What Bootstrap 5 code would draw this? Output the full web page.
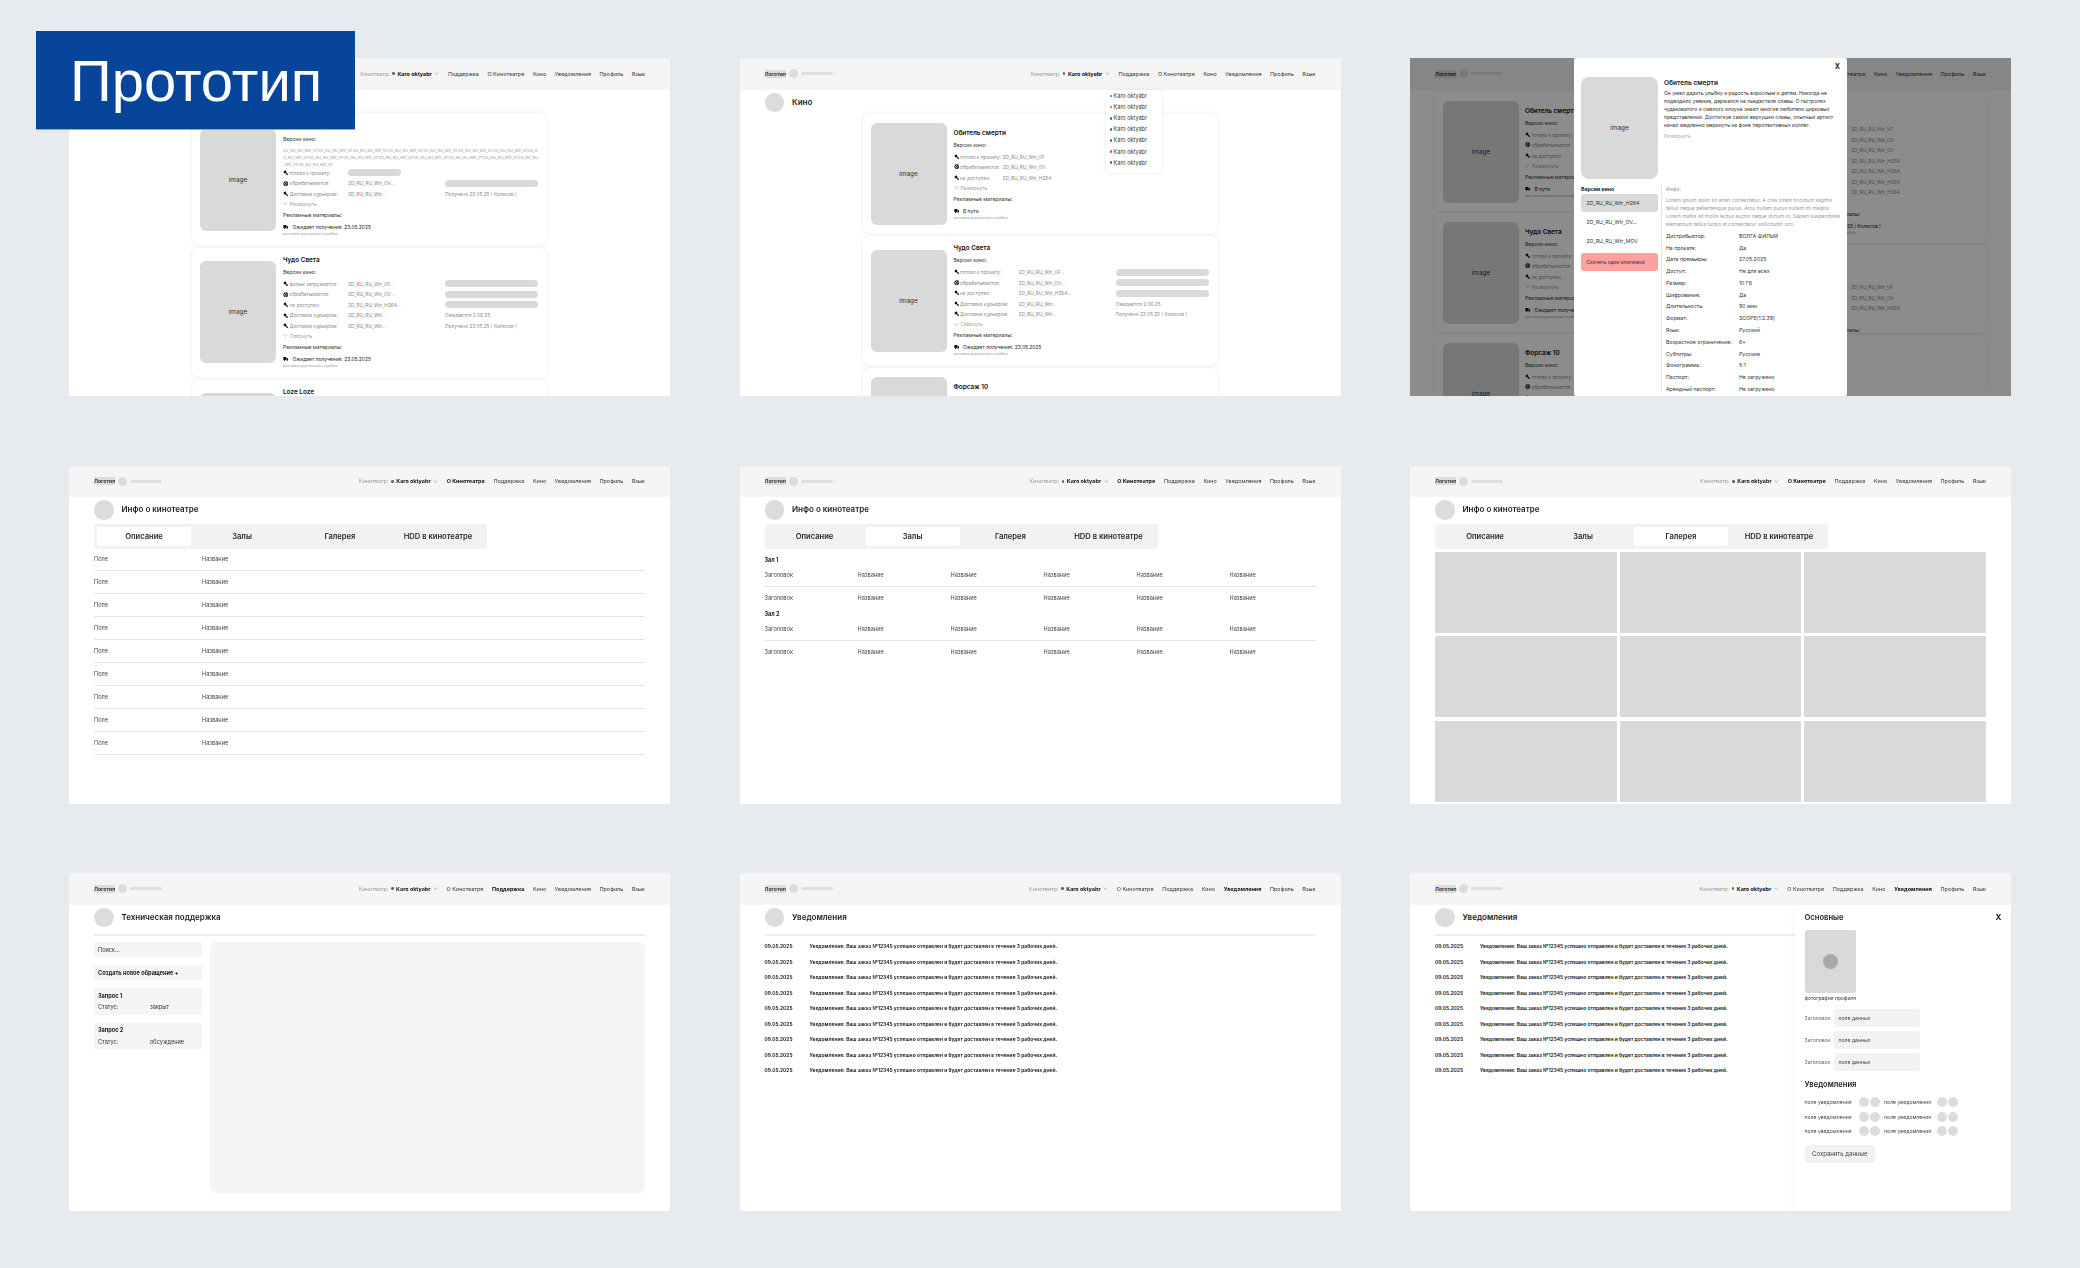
<!DOCTYPE html>
<html lang="ru">
<head>
<meta charset="UTF-8">
<title>Прототип</title>
<link href="https://cdn.jsdelivr.net/npm/bootstrap@5.3.0/dist/css/bootstrap.min.css" rel="stylesheet">
<style>
  body { margin: 0; background: #e7eaef; font-family: Inter, "Noto Sans", sans-serif; color: #1c1c1c; font-size: 6px; line-height: 8px; }
  .board { position: relative; width: 2080px; height: 1268px; padding: 58px 0 0 69px; display: grid; grid-template-columns: repeat(3, 601px); grid-auto-rows: 338px; column-gap: 69.5px; row-gap: 69.5px; overflow: hidden; }
  .screen { position: relative; background: #fff; overflow: hidden; filter: blur(.3px); }
  .screen-open { overflow: visible; }
  .banner { position: absolute; left: 36px; top: 31px; width: 319px; height: 99px; padding-left: 34px; background: #06459a; border-bottom: 1px solid #9aa; color: #fff; font-family: "Liberation Sans", Arial, sans-serif; font-size: 58px; line-height: 100px; z-index: 5; }

  .topbar { height: 31.5px; padding: 0 25px; background: #f5f5f5; flex-wrap: nowrap; }
  .logo-word { display: block; width: 21px; height: 8px; background: #dcdcdc; font-size: 5.2px; font-weight: 600; line-height: 8px; text-align: center; color: #222; }
  .logo-dot { width: 9px; height: 9px; margin: 0 3px; border-radius: 50%; background: #dcdcdc; }
  .logo-line { width: 32px; height: 3px; border-radius: 2px; background: #dfdfdf; }
  .topnav { gap: 8.6px; font-size: 5.45px; }
  .topnav .nav-link { padding: 0; color: #333; }
  .topnav .nav-link.active { color: #111; font-weight: 700; }
  .cinema-pick { gap: 2.5px; color: #999; }
  .cinema-pick b { color: #111; font-weight: 700; }
  .bullet { display: inline-block; width: 2.6px; height: 2.6px; border-radius: 50%; background: #666; flex: none; }
  .bullet-red { background: #e5484d; }
  .chev { width: 5px; height: 3px; fill: none; stroke: #888; stroke-width: 1; }

  .pagehead { display: flex; align-items: center; gap: 8px; padding: 3px 25px 0; font-size: 8px; font-weight: 600; line-height: 19.5px; }
  .pagehead i { width: 19.5px; height: 19.5px; border-radius: 50%; background: #dcdcdc; flex: none; }
  .head-rule { height: 1.5px; margin: 7px 25px 0; background: #eee; }

  .tabbar { width: 393px; height: 25px; margin: 4px 25px 0; padding: 3px; gap: 4px; background: #f2f2f2; border-radius: 3px; flex-wrap: nowrap; }
  .tabbar .nav-link { width: 94px; height: 19px; padding: 0; border-radius: 2px; color: #2a2a2a; font-size: 7.6px; font-weight: 600; line-height: 19px; text-align: center; }
  .tabbar .nav-link.active { background: #fff; color: #2a2a2a; }

  .field-row { display: flex; align-items: center; height: 23px; margin: 0 25px; border-bottom: 1px solid #e4e4e4; color: #444; font-size: 5.6px; }
  .field-row:first-of-type { height: 22px; }
  .field-row span:first-child { width: 108px; }

  .halls { padding-top: 7px; }
  .hall-title { height: 8px; margin: 0 25px; font-size: 5.6px; font-weight: 700; }
  .hall-row { display: grid; grid-template-columns: repeat(6, 93px); align-items: center; height: 23px; margin: 0 25px; color: #444; font-size: 5.6px; }
  .hall-line { border-bottom: 1px solid #e4e4e4; }

  .shots { display: grid; grid-template-columns: repeat(3, 181.5px); grid-auto-rows: 81px; gap: 3.5px 3px; margin: 3px 25px 0; }
  .shots div { background: #d9d9d9; }

  .support { display: flex; gap: 8px; margin: 6.5px 25px 0; }
  .support-left { width: 107.5px; flex: none; display: flex; flex-direction: column; gap: 8px; }
  .support-item { padding: 3.5px 4px; background: #f5f5f5; border-radius: 2px; font-size: 5.6px; color: #333; }
  .support-item b { font-weight: 700; color: #1c1c1c; }
  .support-status { display: grid; grid-template-columns: 52px 1fr; margin-top: 3.5px; }
  .support-chat { flex: 1; height: 251px; background: #f5f5f5; border-radius: 6px; }

  .notice-list { margin-top: 2.75px; }
  .notice { display: flex; align-items: center; height: 15.5px; margin: 0 25px; font-size: 4.95px; font-weight: 600; color: #111; white-space: nowrap; }
  .notice span:first-child { width: 45px; }

  .drawer { position: absolute; left: 385px; right: 0; top: 31.5px; bottom: 0; padding: 8px 10px 0 9.5px; background: #fff; box-shadow: -1px 1px 6px rgba(0,0,0,.04); font-size: 5.1px; color: #444; }
  .drawer h6 { margin: 0; font-size: 7.6px; line-height: 9px; font-weight: 600; color: #1c1c1c; }
  .drawer-x { position: absolute; right: 9.5px; top: 8px; font-size: 8px; line-height: 9px; font-weight: 700; color: #222; }
  .photo { display: flex; align-items: center; justify-content: center; width: 51px; height: 63px; margin-top: 8.5px; background: #d9d9d9; border-radius: 2px; }
  .photo i { width: 15px; height: 15px; border-radius: 50%; background: #a9a9a9; }
  .photo-cap { margin-top: 1px; color: #333; font-size: 5px; }
  .form-lines { display: flex; flex-direction: column; gap: 4px; margin: 7px 0 8.5px; }
  .form-line { display: flex; align-items: center; }
  .form-line label { width: 29px; margin: 0; color: #666; }
  .data-box { width: 86px; height: 18px; padding-left: 5px; border-radius: 3px; background: #f2f2f2; line-height: 18px; color: #444; }
  .switch-grid { display: grid; grid-template-columns: 53.5px 10px 10px 2.1px 52px 10px 10px; grid-auto-rows: 14.5px; column-gap: 1px; align-items: center; margin-top: 6.5px; white-space: nowrap; }
  .switch-grid i { width: 10px; height: 10px; border-radius: 50%; background: #dcdcdc; }
  .btn.save-btn { width: 70.5px; height: 18px; margin-top: 6px; padding: 0; border: 0; border-radius: 3px; background: #f2f2f2; color: #444; font-size: 6px; line-height: 18px; }

  .film-stack { display: flex; flex-direction: column; gap: 3px; width: 355px; margin: 1px 0 0 123px; }
  .film-stack-low { margin-top: 2px; }
  .card.film { flex-direction: row; align-items: center; gap: 7px; padding: 8px; border: 0; border-radius: 7px; box-shadow: 0 0 4px rgba(0,0,0,.09); flex: none; }
  .film-first { padding-top: 10px !important; }
  .film-short { padding: 8.5px 8px !important; }
  .film-short .film-info { padding-top: 2px; }
  .film-img { display: flex; align-items: center; justify-content: center; width: 76px; height: 102px; flex: none; background: #d9d9d9; border-radius: 6px; font-size: 6.4px; color: #333; }
  .film-info { flex: 1; min-width: 0; }
  .film-name { font-size: 6.4px; font-weight: 600; color: #111; }
  .film-sub { margin-top: 4px; font-size: 5.1px; color: #333; }
  .film-sub-gap { margin-top: 3px; }
  .long-versions { margin-top: 3.5px; width: 256px; font-size: 4px; line-height: 7px; color: #999; word-break: break-all; }
  .ver-rows { margin-top: 2.75px; }
  .long-versions + .ver-rows { margin-top: 0; }
  .ver-row { display: grid; grid-template-columns: 65px 97px 93px; align-items: center; height: 10.5px; font-size: 4.8px; color: #888; white-space: nowrap; }
  .ver-short { grid-template-columns: 49px 1fr; }
  .ver-status { display: flex; align-items: center; gap: 1px; }
  .ico { width: 5.5px; height: 5.5px; fill: #111; flex: none; }
  .bar { display: block; height: 7px; border-radius: 4px; background: #d9d9d9; }
  .bar-mid { width: 53px; }
  .film-toggle { margin-top: .75px; display: flex; align-items: center; gap: 2px; font-size: 4.7px; color: #999; }
  .film-ship { display: flex; align-items: center; gap: 4px; margin-top: 4px; font-size: 4.95px; color: #222; white-space: nowrap; }
  .film-note { font-size: 3.6px; line-height: 6px; color: #999; white-space: nowrap; }

  .cinema-menu.dropdown-menu { position: absolute; display: block; left: 366px; top: 31.5px; width: 56px; min-width: 0; height: 83px; padding: 1px 0 0; border: 0; border-radius: 4px; box-shadow: 0 0 4px rgba(0,0,0,.09); font-size: 5.5px; z-index: 3; }
  .cinema-menu .dropdown-item { display: flex; align-items: center; gap: 1.5px; height: 11.1px; padding: 0 0 0 4px; color: #333; font-size: 5.5px; }

  .under { display: flex; margin-top: 2.5px; padding-left: 25px; }
  .under-left { width: 275px; flex: none; display: flex; flex-direction: column; gap: 2px; }
  .under-left .card.film { gap: 6px; }
  .under-right { width: 278px; flex: none; display: flex; flex-direction: column; gap: 2px; }
  .under-card { padding-left: 141px; background: #fff; border-radius: 7px; box-shadow: 0 0 4px rgba(0,0,0,.09); }
  .under-card-a { height: 151px; padding-top: 31.75px; }
  .under-card-b { height: 88px; padding-top: 37px; }
  .under-card-c { height: 60px; }
  .under-card .ver-row { grid-template-columns: 1fr; }
  .shift-text { margin-left: -50px; }
  .under-card-a .film-sub { margin-top: 13px; }
  .under-card-b .film-sub { margin-top: 12px; }
  .dim { position: absolute; inset: 0; background: rgba(0,0,0,.45); z-index: 1; }
  .film-dialog { position: absolute; left: 163.5px; top: 0; width: 273.5px; height: 338px; background: #fff; border-radius: 2px; z-index: 2; }
  .dialog-x { position: absolute; right: 7px; top: 5px; font-size: 7px; line-height: 8px; font-weight: 700; color: #222; }
  .dialog-top { display: flex; gap: 6px; height: 126px; padding: 19px 0 0 7.5px; }
  .dialog-top .film-img { width: 77px; border-radius: 8px; }
  .dialog-text { padding-top: 2px; font-size: 5.05px; color: #333; white-space: nowrap; }
  .dialog-text h6 { margin: 0 0 2px; font-size: 6.6px; line-height: 8px; font-weight: 600; color: #222; }
  .dialog-text p { margin: 0; }
  .dialog-more { margin-top: 3px; color: #aaa; font-size: 4.7px; }
  .dialog-low { display: flex; padding-left: 7.5px; }
  .dialog-vers { width: 77px; flex: none; font-size: 5.2px; }
  .dialog-vers b { display: block; margin: 1px 0; font-weight: 700; color: #222; }
  .dialog-vers .list-group { gap: 1px; border-radius: 0; }
  .dialog-vers .list-group-item { height: 18px; padding: 0 0 0 5.5px; border: 0; border-radius: 3px; background: #fff; color: #333; font-size: 5.2px; line-height: 18px; white-space: nowrap; }
  .dialog-vers .list-group-item.active { background: #d9d9d9; color: #333; }
  .dialog-vers .btn-key { display: block; width: 100%; height: 18px; margin-top: 3px; padding: 0 0 0 5.5px; border: 0; border-radius: 3px; background: #ffa0a0; color: #333; font-size: 4.9px; line-height: 18px; text-align: left; white-space: nowrap; }
  .dialog-info { width: 180px; height: 209px; margin-left: 3px; padding: 1px 0 0 4px; border-left: 1px solid #e5e5e5; font-size: 5.2px; color: #999; white-space: nowrap; }
  .dialog-info p { margin: 3px 0 2px; font-size: 5px; }
  .info-row { display: grid; grid-template-columns: 73px 1fr; height: 11.77px; align-items: center; color: #333; white-space: nowrap; }
</style>
</head>
<body>
<svg class="d-none" xmlns="http://www.w3.org/2000/svg">
  <symbol id="i-hammer" viewBox="0 0 16 16"><path d="M1 6 6 1l4 3.5-1.6 1.6L15 13l-2.2 2.2L6 8.6 4.6 10z"/></symbol>
  <symbol id="i-reel" viewBox="0 0 16 16"><path fill-rule="evenodd" d="M8 1a7 7 0 1 0 0 14A7 7 0 0 0 8 1zm0 1.8a1.7 1.7 0 1 1 0 3.4 1.7 1.7 0 0 1 0-3.4zm0 7a1.7 1.7 0 1 1 0 3.4 1.7 1.7 0 0 1 0-3.4zM4.5 6.3a1.7 1.7 0 1 1 0 3.4 1.7 1.7 0 0 1 0-3.4zm7 0a1.7 1.7 0 1 1 0 3.4 1.7 1.7 0 0 1 0-3.4z"/></symbol>
  <symbol id="i-truck" viewBox="0 0 16 16"><path d="M1 3h9v8.5H1zM11 6h2.4L15 8.6v2.9h-4z"/><circle cx="4.5" cy="12.5" r="1.8"/><circle cx="12" cy="12.5" r="1.8"/></symbol>
  <symbol id="i-chev" viewBox="0 0 8 5"><path d="M1 1l3 3 3-3"/></symbol>
</svg>

<div class="board">

  <!-- 1: films -->
  <section class="screen">
    <nav class="navbar topbar">
      <div class="d-flex align-items-center"><span class="logo-word">Логотип</span><span class="logo-dot"></span><span class="logo-line"></span></div>
      <ul class="nav topnav align-items-center">
        <li class="d-flex align-items-center cinema-pick">Кинотеатр: <span class="bullet"></span><b>Karo oktyabr</b><svg class="chev"><use href="#i-chev"/></svg></li>
        <li><a class="nav-link" href="#">Поддержка</a></li><li><a class="nav-link" href="#">О Кинотеатре</a></li><li><a class="nav-link" href="#">Кино</a></li><li><a class="nav-link" href="#">Уведомления</a></li><li><a class="nav-link" href="#">Профиль</a></li><li><a class="nav-link" href="#">Язык</a></li>
      </ul>
    </nav>
    <div class="pagehead"><i></i>Кино</div>
    <div class="film-stack">
      <article class="card film film-first">
        <div class="film-img">image</div>
        <div class="film-info">
          <div class="film-name">Обитель смерти</div>
          <div class="film-sub">Версии кино:</div>
          <div class="long-versions">2D_RU_RU_Wtr_VF2D_RU_RU_Wtr_VF2D_RU_RU_Wtr_VF2D_RU_RU_Wtr_VF2D_RU_RU_Wtr_VF2D_RU_RU_Wtr_VF2D_RU_RU_Wtr_VF2D_RU_RU_Wtr_VF2D_RU_RU_Wtr_VF2D_RU_RU_Wtr_VF2D_RU_RU_Wtr_VF2D_RU_RU_Wtr_VF2D_RU_RU_Wtr_VF2D_RU_RU_Wtr_VF2D_RU_RU_Wtr_VF2D_RU_RU_Wtr_VF</div>
          <div class="ver-rows">
            <div class="ver-row"><span class="ver-status"><svg class="ico"><use href="#i-hammer"/></svg>готово к прокату:</span><span class="bar bar-mid"></span><span></span></div>
            <div class="ver-row"><span class="ver-status"><svg class="ico"><use href="#i-reel"/></svg>обрабатывается:</span><span>2D_RU_RU_Wtr_OV...</span><span class="bar"></span></div>
            <div class="ver-row"><span class="ver-status"><svg class="ico"><use href="#i-hammer"/></svg>Доставка курьером:</span><span>2D_RU_RU_Wtr...</span><span>Получено 23.05.25 ( Колесов )</span></div>
          </div>
          <div class="film-toggle"><svg class="chev"><use href="#i-chev"/></svg>Развернуть</div>
          <div class="film-sub film-sub-gap">Рекламные материалы:</div>
          <div class="film-ship"><svg class="ico"><use href="#i-truck"/></svg>Ожидает получения: 23.05.2025</div>
          <div class="film-note">доставка курьерской службой</div>
        </div>
      </article>
      <article class="card film">
        <div class="film-img">image</div>
        <div class="film-info">
          <div class="film-name">Чудо Света</div>
          <div class="film-sub">Версии кино:</div>
          <div class="ver-rows">
            <div class="ver-row"><span class="ver-status"><svg class="ico"><use href="#i-hammer"/></svg>фильм загружается:</span><span>2D_RU_RU_Wtr_VF...</span><span class="bar"></span></div>
            <div class="ver-row"><span class="ver-status"><svg class="ico"><use href="#i-reel"/></svg>обрабатывается:</span><span>2D_RU_RU_Wtr_OV...</span><span class="bar"></span></div>
            <div class="ver-row"><span class="ver-status"><svg class="ico"><use href="#i-hammer"/></svg>не доступен:</span><span>2D_RU_RU_Wtr_H264...</span><span class="bar"></span></div>
            <div class="ver-row"><span class="ver-status"><svg class="ico"><use href="#i-hammer"/></svg>Доставка курьером:</span><span>2D_RU_RU_Wtr...</span><span>Ожидается 2.06.25</span></div>
            <div class="ver-row"><span class="ver-status"><svg class="ico"><use href="#i-hammer"/></svg>Доставка курьером:</span><span>2D_RU_RU_Wtr...</span><span>Получено 23.05.25 ( Колесов )</span></div>
          </div>
          <div class="film-toggle"><svg class="chev"><use href="#i-chev"/></svg>Свернуть</div>
          <div class="film-sub film-sub-gap">Рекламные материалы:</div>
          <div class="film-ship"><svg class="ico"><use href="#i-truck"/></svg>Ожидает получения: 23.05.2025</div>
          <div class="film-note">доставка курьерской службой</div>
        </div>
      </article>
      <article class="card film">
        <div class="film-img">image</div>
        <div class="film-info">
          <div class="film-name">Loze Loze</div>
          <div class="film-sub">Версии кино:</div>
          <div class="ver-rows">
            <div class="ver-row"><span class="ver-status"><svg class="ico"><use href="#i-hammer"/></svg>готово к прокату:</span><span>2D_RU_RU_Wtr_VF...</span><span class="bar"></span></div>
            <div class="ver-row"><span class="ver-status"><svg class="ico"><use href="#i-reel"/></svg>обрабатывается:</span><span>2D_RU_RU_Wtr_OV...</span><span class="bar"></span></div>
            <div class="ver-row"><span class="ver-status"><svg class="ico"><use href="#i-hammer"/></svg>не доступен:</span><span>2D_RU_RU_Wtr_H264...</span><span class="bar"></span></div>
            <div class="ver-row"><span class="ver-status"><svg class="ico"><use href="#i-hammer"/></svg>Доставка курьером:</span><span>2D_RU_RU_Wtr...</span><span>Ожидается 2.06.25</span></div>
            <div class="ver-row"><span class="ver-status"><svg class="ico"><use href="#i-hammer"/></svg>Доставка курьером:</span><span>2D_RU_RU_Wtr...</span><span>Получено 23.05.25 ( Колесов )</span></div>
          </div>
          <div class="film-toggle"><svg class="chev"><use href="#i-chev"/></svg>Свернуть</div>
          <div class="film-sub film-sub-gap">Рекламные материалы:</div>
          <div class="film-ship"><svg class="ico"><use href="#i-truck"/></svg>В пути</div>
          <div class="film-note">доставка курьерской службой</div>
        </div>
      </article>
    </div>
  </section>

  <!-- 2: films with the cinema menu open -->
  <section class="screen">
    <nav class="navbar topbar">
      <div class="d-flex align-items-center"><span class="logo-word">Логотип</span><span class="logo-dot"></span><span class="logo-line"></span></div>
      <ul class="nav topnav align-items-center">
        <li class="d-flex align-items-center cinema-pick">Кинотеатр: <span class="bullet"></span><b>Karo oktyabr</b><svg class="chev"><use href="#i-chev"/></svg></li>
        <li><a class="nav-link" href="#">Поддержка</a></li><li><a class="nav-link" href="#">О Кинотеатре</a></li><li><a class="nav-link" href="#">Кино</a></li><li><a class="nav-link" href="#">Уведомления</a></li><li><a class="nav-link" href="#">Профиль</a></li><li><a class="nav-link" href="#">Язык</a></li>
      </ul>
    </nav>
    <div class="pagehead"><i></i>Кино</div>
    <div class="dropdown-menu cinema-menu">
      <a class="dropdown-item" href="#"><span class="bullet"></span>Karo oktyabr</a>
      <a class="dropdown-item" href="#"><span class="bullet bullet-red"></span>Karo oktyabr</a>
      <a class="dropdown-item" href="#"><span class="bullet"></span>Karo oktyabr</a>
      <a class="dropdown-item" href="#"><span class="bullet"></span>Karo oktyabr</a>
      <a class="dropdown-item" href="#"><span class="bullet"></span>Karo oktyabr</a>
      <a class="dropdown-item" href="#"><span class="bullet bullet-red"></span>Karo oktyabr</a>
      <a class="dropdown-item" href="#"><span class="bullet"></span>Karo oktyabr</a>
    </div>
    <div class="film-stack film-stack-low">
      <article class="card film film-short">
        <div class="film-img">image</div>
        <div class="film-info">
          <div class="film-name">Обитель смерти</div>
          <div class="film-sub">Версии кино:</div>
          <div class="ver-rows">
            <div class="ver-row ver-short"><span class="ver-status"><svg class="ico"><use href="#i-hammer"/></svg>готово к прокату:</span><span>2D_RU_RU_Wtr_VF</span></div>
            <div class="ver-row ver-short"><span class="ver-status"><svg class="ico"><use href="#i-reel"/></svg>обрабатывается:</span><span>2D_RU_RU_Wtr_OV</span></div>
            <div class="ver-row ver-short"><span class="ver-status"><svg class="ico"><use href="#i-hammer"/></svg>не доступен:</span><span>2D_RU_RU_Wtr_H264</span></div>
          </div>
          <div class="film-toggle"><svg class="chev"><use href="#i-chev"/></svg>Развернуть</div>
          <div class="film-sub film-sub-gap">Рекламные материалы:</div>
          <div class="film-ship"><svg class="ico"><use href="#i-truck"/></svg>В пути</div>
          <div class="film-note">доставка курьерской службой</div>
        </div>
      </article>
      <article class="card film">
        <div class="film-img">image</div>
        <div class="film-info">
          <div class="film-name">Чудо Света</div>
          <div class="film-sub">Версии кино:</div>
          <div class="ver-rows">
            <div class="ver-row"><span class="ver-status"><svg class="ico"><use href="#i-hammer"/></svg>готово к прокату:</span><span>2D_RU_RU_Wtr_VF...</span><span class="bar"></span></div>
            <div class="ver-row"><span class="ver-status"><svg class="ico"><use href="#i-reel"/></svg>обрабатывается:</span><span>2D_RU_RU_Wtr_OV...</span><span class="bar"></span></div>
            <div class="ver-row"><span class="ver-status"><svg class="ico"><use href="#i-hammer"/></svg>не доступен:</span><span>2D_RU_RU_Wtr_H264...</span><span class="bar"></span></div>
            <div class="ver-row"><span class="ver-status"><svg class="ico"><use href="#i-hammer"/></svg>Доставка курьером:</span><span>2D_RU_RU_Wtr...</span><span>Ожидается 2.06.25</span></div>
            <div class="ver-row"><span class="ver-status"><svg class="ico"><use href="#i-hammer"/></svg>Доставка курьером:</span><span>2D_RU_RU_Wtr...</span><span>Получено 23.05.25 ( Колесов )</span></div>
          </div>
          <div class="film-toggle"><svg class="chev"><use href="#i-chev"/></svg>Свернуть</div>
          <div class="film-sub film-sub-gap">Рекламные материалы:</div>
          <div class="film-ship"><svg class="ico"><use href="#i-truck"/></svg>Ожидает получения: 23.05.2025</div>
          <div class="film-note">доставка курьерской службой</div>
        </div>
      </article>
      <article class="card film film-short">
        <div class="film-img">image</div>
        <div class="film-info">
          <div class="film-name">Форсаж 10</div>
          <div class="film-sub">Версии кино:</div>
          <div class="ver-rows">
            <div class="ver-row ver-short"><span class="ver-status"><svg class="ico"><use href="#i-hammer"/></svg>готово к прокату:</span><span>2D_RU_RU_Wtr_VF</span></div>
            <div class="ver-row ver-short"><span class="ver-status"><svg class="ico"><use href="#i-reel"/></svg>обрабатывается:</span><span>2D_RU_RU_Wtr_OV</span></div>
            <div class="ver-row ver-short"><span class="ver-status"><svg class="ico"><use href="#i-hammer"/></svg>не доступен:</span><span>2D_RU_RU_Wtr_H264</span></div>
          </div>
          <div class="film-toggle"><svg class="chev"><use href="#i-chev"/></svg>Развернуть</div>
          <div class="film-sub film-sub-gap">Рекламные материалы:</div>
          <div class="film-ship"><svg class="ico"><use href="#i-truck"/></svg>В пути</div>
          <div class="film-note">доставка курьерской службой</div>
        </div>
      </article>
    </div>
  </section>

  <!-- 3: film dialog over the dimmed list -->
  <section class="screen">
    <nav class="navbar topbar">
      <div class="d-flex align-items-center"><span class="logo-word">Логотип</span><span class="logo-dot"></span><span class="logo-line"></span></div>
      <ul class="nav topnav align-items-center">
        <li class="d-flex align-items-center cinema-pick">Кинотеатр: <span class="bullet"></span><b>Karo oktyabr</b><svg class="chev"><use href="#i-chev"/></svg></li>
        <li><a class="nav-link" href="#">Поддержка</a></li><li><a class="nav-link" href="#">О Кинотеатре</a></li><li><a class="nav-link" href="#">Кино</a></li><li><a class="nav-link" href="#">Уведомления</a></li><li><a class="nav-link" href="#">Профиль</a></li><li><a class="nav-link" href="#">Язык</a></li>
      </ul>
    </nav>
    <div class="under">
      <div class="under-left">
        <article class="card film film-short">
          <div class="film-img">image</div>
          <div class="film-info">
            <div class="film-name">Обитель смерти</div>
            <div class="film-sub">Версии кино:</div>
            <div class="ver-rows">
              <div class="ver-row ver-short"><span class="ver-status"><svg class="ico"><use href="#i-hammer"/></svg>готово к прокату:</span></div>
              <div class="ver-row ver-short"><span class="ver-status"><svg class="ico"><use href="#i-reel"/></svg>обрабатывается:</span></div>
              <div class="ver-row ver-short"><span class="ver-status"><svg class="ico"><use href="#i-hammer"/></svg>не доступен:</span></div>
            </div>
            <div class="film-toggle"><svg class="chev"><use href="#i-chev"/></svg>Развернуть</div>
            <div class="film-sub film-sub-gap">Рекламные материалы:</div>
            <div class="film-ship"><svg class="ico"><use href="#i-truck"/></svg>В пути</div>
            <div class="film-note">доставка курьерской службой</div>
          </div>
        </article>
        <article class="card film film-short">
          <div class="film-img">image</div>
          <div class="film-info">
            <div class="film-name">Чудо Света</div>
            <div class="film-sub">Версии кино:</div>
            <div class="ver-rows">
              <div class="ver-row ver-short"><span class="ver-status"><svg class="ico"><use href="#i-hammer"/></svg>готово к прокату:</span></div>
              <div class="ver-row ver-short"><span class="ver-status"><svg class="ico"><use href="#i-reel"/></svg>обрабатывается:</span></div>
              <div class="ver-row ver-short"><span class="ver-status"><svg class="ico"><use href="#i-hammer"/></svg>не доступен:</span></div>
            </div>
            <div class="film-toggle"><svg class="chev"><use href="#i-chev"/></svg>Развернуть</div>
            <div class="film-sub film-sub-gap">Рекламные материалы:</div>
            <div class="film-ship"><svg class="ico"><use href="#i-truck"/></svg>Ожидает получения: 23.05.2025</div>
            <div class="film-note">доставка курьерской службой</div>
          </div>
        </article>
        <article class="card film film-short">
          <div class="film-img">image</div>
          <div class="film-info">
            <div class="film-name">Форсаж 10</div>
            <div class="film-sub">Версии кино:</div>
            <div class="ver-rows">
              <div class="ver-row ver-short"><span class="ver-status"><svg class="ico"><use href="#i-hammer"/></svg>готово к прокату:</span></div>
              <div class="ver-row ver-short"><span class="ver-status"><svg class="ico"><use href="#i-reel"/></svg>обрабатывается:</span></div>
              <div class="ver-row ver-short"><span class="ver-status"><svg class="ico"><use href="#i-hammer"/></svg>не доступен:</span></div>
            </div>
            <div class="film-toggle"><svg class="chev"><use href="#i-chev"/></svg>Развернуть</div>
            <div class="film-sub film-sub-gap">Рекламные материалы:</div>
            <div class="film-ship"><svg class="ico"><use href="#i-truck"/></svg>В пути</div>
            <div class="film-note">доставка курьерской службой</div>
          </div>
        </article>
      </div>
      <div class="under-right">
        <div class="under-card under-card-a">
          <div class="ver-row"><span>2D_RU_RU_Wtr_VF</span></div>
          <div class="ver-row"><span>2D_RU_RU_Wtr_OV</span></div>
          <div class="ver-row"><span>2D_RU_RU_Wtr_OV</span></div>
          <div class="ver-row"><span>2D_RU_RU_Wtr_H264</span></div>
          <div class="ver-row"><span>2D_RU_RU_Wtr_H264</span></div>
          <div class="ver-row"><span>2D_RU_RU_Wtr_H264</span></div>
          <div class="ver-row"><span>2D_RU_RU_Wtr_H264</span></div>
          <div class="film-sub shift-text">Рекламные материалы:</div>
          <div class="film-ship shift-text">Получено 23.05.2025 | Колесов )</div>
          <div class="film-note shift-text">доставка курьерской службой</div>
        </div>
        <div class="under-card under-card-b">
          <div class="ver-row"><span>2D_RU_RU_Wtr_VF</span></div>
          <div class="ver-row"><span>2D_RU_RU_Wtr_OV</span></div>
          <div class="ver-row"><span>2D_RU_RU_Wtr_H264</span></div>
          <div class="film-sub shift-text">Рекламные материалы:</div>
        </div>
        <div class="under-card under-card-c"></div>
      </div>
    </div>
    <div class="dim"></div>
    <div class="film-dialog">
      <span class="dialog-x">X</span>
      <div class="dialog-top">
        <div class="film-img">image</div>
        <div class="dialog-text">
          <h6>Обитель смерти</h6>
          <p>Он умел дарить улыбку и радость взрослым и детям. Никогда не<br>подводило умение, держался на пьедестале славы. О гастролях<br>чудаковатого и смелого клоуна знают многие любители цирковых<br>представлений. Достигнув самой верхушки славы, опытный артист<br>начал медленно меркнуть на фоне перспективных коллег.</p>
          <div class="dialog-more">Развернуть</div>
        </div>
      </div>
      <div class="dialog-low">
        <div class="dialog-vers">
          <b>Версии кино</b>
          <div class="list-group">
            <a class="list-group-item active" href="#">2D_RU_RU_Wtr_H264</a>
            <a class="list-group-item" href="#">2D_RU_RU_Wtr_OV...</a>
            <a class="list-group-item" href="#">2D_RU_RU_Wtr_MOV</a>
          </div>
          <button class="btn-key" type="button">Скачать один ключевой</button>
        </div>
        <div class="dialog-info">
          Инфо:
          <p>Lorem ipsum dolor sit amet consectetur. A cras lorem tincidunt sagittis<br>tellus neque pellentesque purus. Arcu nullam purus nullam mi magna.<br>Lorem mattis sit mollis lectus auctor neque dictum in. Sapien suspendisse<br>elementum tellus turpis at consectetur sollicitudin orci.</p>
          <div class="info-row"><span>Дистрибьютор:</span><span>ВОЛГА ФИЛЬМ</span></div>
          <div class="info-row"><span>На прокате:</span><span>Да</span></div>
          <div class="info-row"><span>Дата премьеры:</span><span>27.05.2025</span></div>
          <div class="info-row"><span>Доступ:</span><span>Не для всех</span></div>
          <div class="info-row"><span>Размер:</span><span>10 Гб</span></div>
          <div class="info-row"><span>Шифрование:</span><span>Да</span></div>
          <div class="info-row"><span>Длительность:</span><span>90 мин</span></div>
          <div class="info-row"><span>Формат:</span><span>SCOPE(1:2.39)</span></div>
          <div class="info-row"><span>Язык:</span><span>Русский</span></div>
          <div class="info-row"><span>Возрастное ограничение:</span><span>6+</span></div>
          <div class="info-row"><span>Субтитры:</span><span>Русские</span></div>
          <div class="info-row"><span>Фонограмма:</span><span>5:1</span></div>
          <div class="info-row"><span>Паспорт:</span><span>Не загружено</span></div>
          <div class="info-row"><span>Арендный паспорт:</span><span>Не загружено</span></div>
        </div>
      </div>
    </div>
  </section>

  <!-- 4: cinema info, description -->
  <section class="screen">
    <nav class="navbar topbar">
      <div class="d-flex align-items-center"><span class="logo-word">Логотип</span><span class="logo-dot"></span><span class="logo-line"></span></div>
      <ul class="nav topnav align-items-center">
        <li class="d-flex align-items-center cinema-pick">Кинотеатр: <span class="bullet"></span><b>Karo oktyabr</b><svg class="chev"><use href="#i-chev"/></svg></li>
        <li><a class="nav-link active" href="#">О Кинотеатре</a></li><li><a class="nav-link" href="#">Поддержка</a></li><li><a class="nav-link" href="#">Кино</a></li><li><a class="nav-link" href="#">Уведомления</a></li><li><a class="nav-link" href="#">Профиль</a></li><li><a class="nav-link" href="#">Язык</a></li>
      </ul>
    </nav>
    <div class="pagehead"><i></i>Инфо о кинотеатре</div>
    <ul class="nav tabbar"><li><a class="nav-link active" href="#">Описание</a></li><li><a class="nav-link" href="#">Залы</a></li><li><a class="nav-link" href="#">Галерея</a></li><li><a class="nav-link" href="#">HDD в кинотеатре</a></li></ul>
    <div>
      <div class="field-row"><span>Поле</span><span>Название</span></div>
      <div class="field-row"><span>Поле</span><span>Название</span></div>
      <div class="field-row"><span>Поле</span><span>Название</span></div>
      <div class="field-row"><span>Поле</span><span>Название</span></div>
      <div class="field-row"><span>Поле</span><span>Название</span></div>
      <div class="field-row"><span>Поле</span><span>Название</span></div>
      <div class="field-row"><span>Поле</span><span>Название</span></div>
      <div class="field-row"><span>Поле</span><span>Название</span></div>
      <div class="field-row"><span>Поле</span><span>Название</span></div>
    </div>
  </section>

  <!-- 5: cinema info, halls -->
  <section class="screen">
    <nav class="navbar topbar">
      <div class="d-flex align-items-center"><span class="logo-word">Логотип</span><span class="logo-dot"></span><span class="logo-line"></span></div>
      <ul class="nav topnav align-items-center">
        <li class="d-flex align-items-center cinema-pick">Кинотеатр: <span class="bullet"></span><b>Karo oktyabr</b><svg class="chev"><use href="#i-chev"/></svg></li>
        <li><a class="nav-link active" href="#">О Кинотеатре</a></li><li><a class="nav-link" href="#">Поддержка</a></li><li><a class="nav-link" href="#">Кино</a></li><li><a class="nav-link" href="#">Уведомления</a></li><li><a class="nav-link" href="#">Профиль</a></li><li><a class="nav-link" href="#">Язык</a></li>
      </ul>
    </nav>
    <div class="pagehead"><i></i>Инфо о кинотеатре</div>
    <ul class="nav tabbar"><li><a class="nav-link" href="#">Описание</a></li><li><a class="nav-link active" href="#">Залы</a></li><li><a class="nav-link" href="#">Галерея</a></li><li><a class="nav-link" href="#">HDD в кинотеатре</a></li></ul>
    <div class="halls">
      <div class="hall-title">Зал 1</div>
      <div class="hall-row hall-line"><span>Заголовок</span><span>Название</span><span>Название</span><span>Название</span><span>Название</span><span>Название</span></div>
      <div class="hall-row"><span>Заголовок</span><span>Название</span><span>Название</span><span>Название</span><span>Название</span><span>Название</span></div>
      <div class="hall-title">Зал 2</div>
      <div class="hall-row hall-line"><span>Заголовок</span><span>Название</span><span>Название</span><span>Название</span><span>Название</span><span>Название</span></div>
      <div class="hall-row"><span>Заголовок</span><span>Название</span><span>Название</span><span>Название</span><span>Название</span><span>Название</span></div>
    </div>
  </section>

  <!-- 6: cinema info, gallery -->
  <section class="screen">
    <nav class="navbar topbar">
      <div class="d-flex align-items-center"><span class="logo-word">Логотип</span><span class="logo-dot"></span><span class="logo-line"></span></div>
      <ul class="nav topnav align-items-center">
        <li class="d-flex align-items-center cinema-pick">Кинотеатр: <span class="bullet"></span><b>Karo oktyabr</b><svg class="chev"><use href="#i-chev"/></svg></li>
        <li><a class="nav-link active" href="#">О Кинотеатре</a></li><li><a class="nav-link" href="#">Поддержка</a></li><li><a class="nav-link" href="#">Кино</a></li><li><a class="nav-link" href="#">Уведомления</a></li><li><a class="nav-link" href="#">Профиль</a></li><li><a class="nav-link" href="#">Язык</a></li>
      </ul>
    </nav>
    <div class="pagehead"><i></i>Инфо о кинотеатре</div>
    <ul class="nav tabbar"><li><a class="nav-link" href="#">Описание</a></li><li><a class="nav-link" href="#">Залы</a></li><li><a class="nav-link active" href="#">Галерея</a></li><li><a class="nav-link" href="#">HDD в кинотеатре</a></li></ul>
    <div class="shots"><div></div><div></div><div></div><div></div><div></div><div></div><div></div><div></div><div></div></div>
  </section>

  <!-- 7: support -->
  <section class="screen">
    <nav class="navbar topbar">
      <div class="d-flex align-items-center"><span class="logo-word">Логотип</span><span class="logo-dot"></span><span class="logo-line"></span></div>
      <ul class="nav topnav align-items-center">
        <li class="d-flex align-items-center cinema-pick">Кинотеатр: <span class="bullet"></span><b>Karo oktyabr</b><svg class="chev"><use href="#i-chev"/></svg></li>
        <li><a class="nav-link" href="#">О Кинотеатре</a></li><li><a class="nav-link active" href="#">Поддержка</a></li><li><a class="nav-link" href="#">Кино</a></li><li><a class="nav-link" href="#">Уведомления</a></li><li><a class="nav-link" href="#">Профиль</a></li><li><a class="nav-link" href="#">Язык</a></li>
      </ul>
    </nav>
    <div class="pagehead"><i></i>Техническая поддержка</div>
    <div class="head-rule"></div>
    <div class="support">
      <div class="support-left">
        <div class="support-item">Поиск...</div>
        <div class="support-item"><b>Создать новое обращение +</b></div>
        <div class="support-item"><b>Запрос 1</b><div class="support-status"><span>Статус:</span><span>закрыт</span></div></div>
        <div class="support-item"><b>Запрос 2</b><div class="support-status"><span>Статус:</span><span>обсуждение</span></div></div>
      </div>
      <div class="support-chat"></div>
    </div>
  </section>

  <!-- 8: notifications -->
  <section class="screen">
    <nav class="navbar topbar">
      <div class="d-flex align-items-center"><span class="logo-word">Логотип</span><span class="logo-dot"></span><span class="logo-line"></span></div>
      <ul class="nav topnav align-items-center">
        <li class="d-flex align-items-center cinema-pick">Кинотеатр: <span class="bullet"></span><b>Karo oktyabr</b><svg class="chev"><use href="#i-chev"/></svg></li>
        <li><a class="nav-link" href="#">О Кинотеатре</a></li><li><a class="nav-link" href="#">Поддержка</a></li><li><a class="nav-link" href="#">Кино</a></li><li><a class="nav-link active" href="#">Уведомления</a></li><li><a class="nav-link" href="#">Профиль</a></li><li><a class="nav-link" href="#">Язык</a></li>
      </ul>
    </nav>
    <div class="pagehead"><i></i>Уведомления</div>
    <div class="head-rule"></div>
    <div class="notice-list">
      <div class="notice"><span>09.05.2025</span><span>Уведомление: Ваш заказ №12345 успешно отправлен и будет доставлен в течение 3 рабочих дней.</span></div>
      <div class="notice"><span>09.05.2025</span><span>Уведомление: Ваш заказ №12345 успешно отправлен и будет доставлен в течение 3 рабочих дней.</span></div>
      <div class="notice"><span>09.05.2025</span><span>Уведомление: Ваш заказ №12345 успешно отправлен и будет доставлен в течение 3 рабочих дней.</span></div>
      <div class="notice"><span>09.05.2025</span><span>Уведомление: Ваш заказ №12345 успешно отправлен и будет доставлен в течение 3 рабочих дней.</span></div>
      <div class="notice"><span>09.05.2025</span><span>Уведомление: Ваш заказ №12345 успешно отправлен и будет доставлен в течение 3 рабочих дней.</span></div>
      <div class="notice"><span>09.05.2025</span><span>Уведомление: Ваш заказ №12345 успешно отправлен и будет доставлен в течение 3 рабочих дней.</span></div>
      <div class="notice"><span>09.05.2025</span><span>Уведомление: Ваш заказ №12345 успешно отправлен и будет доставлен в течение 3 рабочих дней.</span></div>
      <div class="notice"><span>09.05.2025</span><span>Уведомление: Ваш заказ №12345 успешно отправлен и будет доставлен в течение 3 рабочих дней.</span></div>
      <div class="notice"><span>09.05.2025</span><span>Уведомление: Ваш заказ №12345 успешно отправлен и будет доставлен в течение 3 рабочих дней.</span></div>
    </div>
  </section>

  <!-- 9: notifications with the profile drawer -->
  <section class="screen screen-open">
    <nav class="navbar topbar">
      <div class="d-flex align-items-center"><span class="logo-word">Логотип</span><span class="logo-dot"></span><span class="logo-line"></span></div>
      <ul class="nav topnav align-items-center">
        <li class="d-flex align-items-center cinema-pick">Кинотеатр: <span class="bullet"></span><b>Karo oktyabr</b><svg class="chev"><use href="#i-chev"/></svg></li>
        <li><a class="nav-link" href="#">О Кинотеатре</a></li><li><a class="nav-link" href="#">Поддержка</a></li><li><a class="nav-link" href="#">Кино</a></li><li><a class="nav-link active" href="#">Уведомления</a></li><li><a class="nav-link" href="#">Профиль</a></li><li><a class="nav-link" href="#">Язык</a></li>
      </ul>
    </nav>
    <div class="pagehead"><i></i>Уведомления</div>
    <div class="head-rule"></div>
    <div class="notice-list">
      <div class="notice"><span>09.05.2025</span><span>Уведомление: Ваш заказ №12345 успешно отправлен и будет доставлен в течение 3 рабочих дней.</span></div>
      <div class="notice"><span>09.05.2025</span><span>Уведомление: Ваш заказ №12345 успешно отправлен и будет доставлен в течение 3 рабочих дней.</span></div>
      <div class="notice"><span>09.05.2025</span><span>Уведомление: Ваш заказ №12345 успешно отправлен и будет доставлен в течение 3 рабочих дней.</span></div>
      <div class="notice"><span>09.05.2025</span><span>Уведомление: Ваш заказ №12345 успешно отправлен и будет доставлен в течение 3 рабочих дней.</span></div>
      <div class="notice"><span>09.05.2025</span><span>Уведомление: Ваш заказ №12345 успешно отправлен и будет доставлен в течение 3 рабочих дней.</span></div>
      <div class="notice"><span>09.05.2025</span><span>Уведомление: Ваш заказ №12345 успешно отправлен и будет доставлен в течение 3 рабочих дней.</span></div>
      <div class="notice"><span>09.05.2025</span><span>Уведомление: Ваш заказ №12345 успешно отправлен и будет доставлен в течение 3 рабочих дней.</span></div>
      <div class="notice"><span>09.05.2025</span><span>Уведомление: Ваш заказ №12345 успешно отправлен и будет доставлен в течение 3 рабочих дней.</span></div>
      <div class="notice"><span>09.05.2025</span><span>Уведомление: Ваш заказ №12345 успешно отправлен и будет доставлен в течение 3 рабочих дней.</span></div>
    </div>
    <aside class="drawer">
      <h6>Основные</h6>
      <span class="drawer-x">X</span>
      <div class="photo"><i></i></div>
      <div class="photo-cap">фотография профиля</div>
      <div class="form-lines">
        <div class="form-line"><label>Заголовок</label><div class="data-box">поле данных</div></div>
        <div class="form-line"><label>Заголовок</label><div class="data-box">поле данных</div></div>
        <div class="form-line"><label>Заголовок</label><div class="data-box">поле данных</div></div>
      </div>
      <h6>Уведомления</h6>
      <div class="switch-grid">
        <span>поле уведомления</span><i></i><i></i><span></span><span>поле уведомления</span><i></i><i></i>
        <span>поле уведомления</span><i></i><i></i><span></span><span>поле уведомления</span><i></i><i></i>
        <span>поле уведомления</span><i></i><i></i><span></span><span>поле уведомления</span><i></i><i></i>
      </div>
      <button class="btn save-btn" type="button">Сохранить данные</button>
    </aside>
  </section>

  <div class="banner">Прототип</div>
</div>
<script src="https://cdn.jsdelivr.net/npm/bootstrap@5.3.0/dist/js/bootstrap.bundle.min.js"></script>
</body>
</html>
